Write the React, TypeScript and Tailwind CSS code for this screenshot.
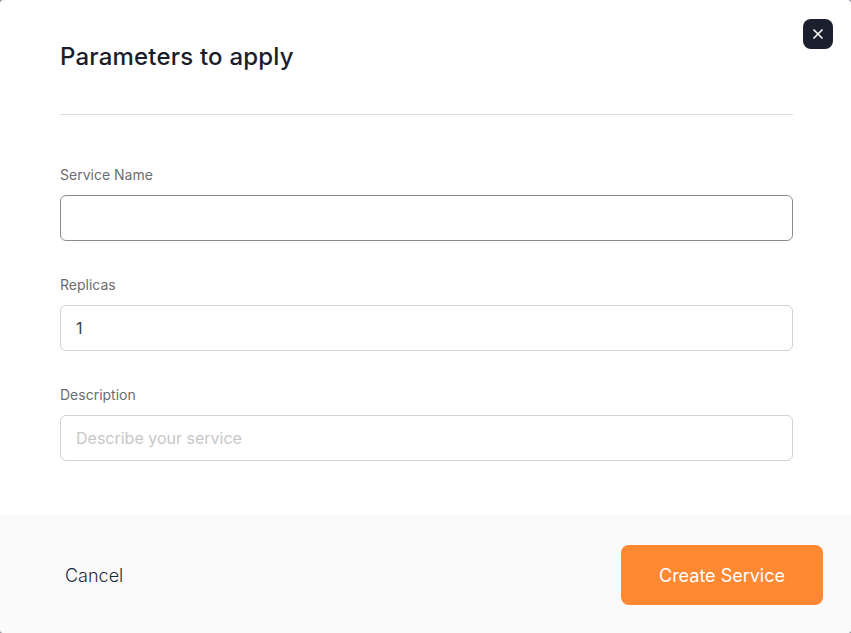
import { X } from "lucide-react";

export default function App() {
  return (
    <div className="min-h-screen w-full bg-[#9a9ca3]" style={{ fontFamily: "Inter, 'Noto Sans', sans-serif" }}>
      <div className="relative flex h-[633px] w-[851px] flex-col overflow-hidden rounded-[4px] bg-white">
        <button className="absolute right-[18px] top-[19px] flex h-[30px] w-[30px] items-center justify-center rounded-[8px] bg-[#1b1f2e] text-white">
          <X size={16} strokeWidth={2.5} />
        </button>

        <div className="flex-1 pl-[60px] pr-[58px]">
          <h2 className="pt-[41px] text-[24px] leading-[32px] font-medium tracking-[0.2px] text-[#1b1d2b]">Parameters to apply</h2>
          <div className="mt-[41px] h-px bg-[#dcdcdc]" />

          <div className="mt-[50px] flex flex-col gap-[34px]">
            <div>
              <label className="block text-[14px] leading-[20px] text-[#6a6e73]">Service Name</label>
              <input
                autoFocus
                className="mt-[10px] h-[46px] w-full rounded-[6px] border border-[#8a8d90] px-[15px] text-[16px] text-[#151515] outline-none caret-black"
              />
            </div>
            <div>
              <label className="block text-[14px] leading-[20px] text-[#6a6e73]">Replicas</label>
              <input
                defaultValue="1"
                className="mt-[10px] h-[46px] w-full rounded-[6px] border border-[#d2d2d2] px-[15px] text-[16px] text-[#3c3f42] outline-none"
              />
            </div>
            <div>
              <label className="block text-[14px] leading-[20px] text-[#6a6e73]">Description</label>
              <input
                placeholder="Describe your service"
                className="mt-[10px] h-[46px] w-full rounded-[6px] border border-[#d2d2d2] px-[15px] text-[16px] text-[#3c3f42] outline-none placeholder:text-[#c7c7c7]"
              />
            </div>
          </div>
        </div>

        <div className="flex h-[118px] items-center justify-between bg-[#fafafa] pl-[65px] pr-[28px] pt-[2px]">
          <button className="text-[18px] font-light text-[#1f2a3c]">Cancel</button>
          <button className="h-[60px] w-[202px] rounded-[8px] bg-[#ff8833] text-[18px] text-white">Create Service</button>
        </div>
      </div>
    </div>
  );
}
